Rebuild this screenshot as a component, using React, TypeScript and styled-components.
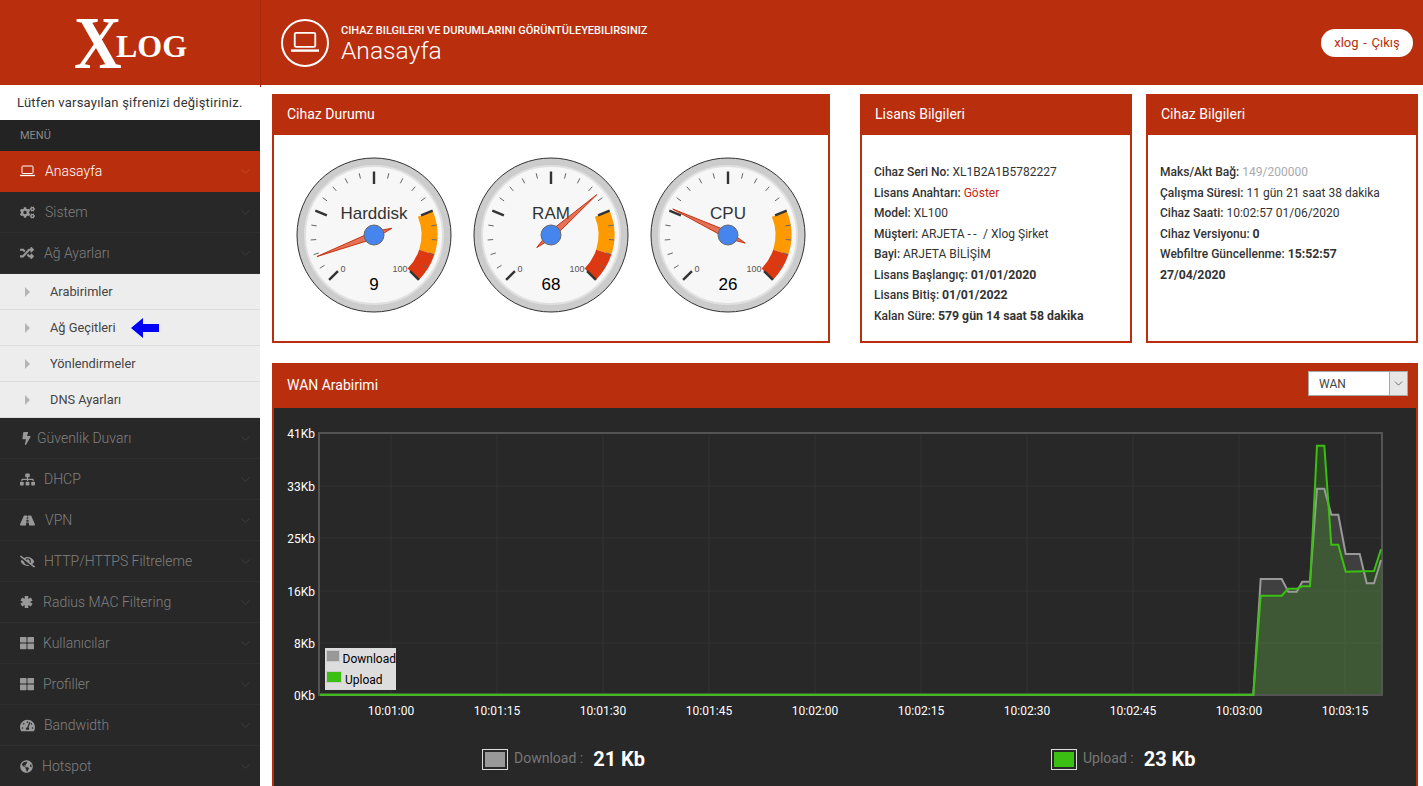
import styled, { createGlobalStyle } from 'styled-components'
import { ChevronDown } from 'lucide-react'
import {
  FaBolt,
  FaCogs,
  FaEyeSlash,
  FaGlobeAmericas,
  FaRandom,
  FaRoad,
  FaSitemap,
  FaTachometerAlt,
  FaThLarge,
} from 'react-icons/fa'
import type { ReactNode } from 'react'

const RED = '#b92e0c'

const GlobalStyle = createGlobalStyle`
  html, body {
    margin: 0;
    height: 100%;
    overflow: hidden;
    background: #fff;
    font-family: Roboto, "Liberation Sans", sans-serif;
  }
`

function LaptopIcon({ size }: { size: number }) {
  return (
    <svg width={size} height={size * 0.8} viewBox="0 0 30 24" fill="none" stroke="currentColor">
      <rect x="4" y="2" width="22" height="15" rx="1.5" strokeWidth="2" />
      <path d="M0 21h30" strokeWidth="2.6" />
    </svg>
  )
}

function AsteriskIcon() {
  return (
    <svg width={13} height={14} viewBox="0 0 13 14" stroke="currentColor" strokeWidth={3.6}>
      <path d="M6.5 1v12M1.3 4l10.4 6M11.7 4L1.3 10" />
    </svg>
  )
}

const menuTop = [
  { label: 'Anasayfa', icon: <LaptopIcon size={15} />, left: 45, active: true },
  { label: 'Sistem', icon: <FaCogs size={15} />, left: 45 },
  { label: 'Ağ Ayarları', icon: <FaRandom size={14} />, left: 44 },
]

const subMenu = ['Arabirimler', 'Ağ Geçitleri', 'Yönlendirmeler', 'DNS Ayarları']

const menuBottom = [
  { label: 'Güvenlik Duvarı', icon: <FaBolt size={13} />, left: 37 },
  { label: 'DHCP', icon: <FaSitemap size={15} />, left: 44 },
  { label: 'VPN', icon: <FaRoad size={15} />, left: 45 },
  { label: 'HTTP/HTTPS Filtreleme', icon: <FaEyeSlash size={15} />, left: 44 },
  { label: 'Radius MAC Filtering', icon: <AsteriskIcon />, left: 43 },
  { label: 'Kullanıcılar', icon: <FaThLarge size={14} />, left: 43 },
  { label: 'Profiller', icon: <FaThLarge size={14} />, left: 43 },
  { label: 'Bandwidth', icon: <FaTachometerAlt size={15} />, left: 44 },
  { label: 'Hotspot', icon: <FaGlobeAmericas size={13} />, left: 42 },
]

function polar(r: number, pct: number, cx = 88, cy = 88) {
  const a = ((-225 + pct * 2.7) * Math.PI) / 180
  return [cx + r * Math.cos(a), cy + r * Math.sin(a)]
}

function band(from: number, to: number, r1: number, r2: number) {
  const [ax, ay] = polar(r2, from)
  const [bx, by] = polar(r2, to)
  const [cx, cy] = polar(r1, to)
  const [dx, dy] = polar(r1, from)
  return `M${ax} ${ay}A${r2} ${r2} 0 0 1 ${bx} ${by}L${cx} ${cy}A${r1} ${r1} 0 0 0 ${dx} ${dy}Z`
}

function Gauge({ label, value }: { label: string; value: number }) {
  const ticks: ReactNode[] = []
  for (let i = 0; i <= 20; i++) {
    const major = i % 5 === 0
    const [x1, y1] = polar(major ? 51 : 58, i * 5)
    const [x2, y2] = polar(63.5, i * 5)
    ticks.push(
      <line
        key={i}
        x1={x1}
        y1={y1}
        x2={x2}
        y2={y2}
        stroke={major ? '#333' : '#666'}
        strokeWidth={major ? 2.4 : 1}
      />
    )
  }
  const [tx, ty] = polar(61, value)
  const [bx, by] = polar(-19, value)
  const [sx, sy] = polar(3.5, value + 100 / 3)
  const [ex, ey] = polar(3.5, value - 100 / 3)
  return (
    <svg width={177} height={177} viewBox="0 0 177 177">
      <circle cx={88} cy={88} r={77} fill="#ccc" stroke="#333" strokeWidth={1} />
      <circle cx={88} cy={88} r={69} fill="#f7f7f7" stroke="#e0e0e0" strokeWidth={2} />
      <path d={band(75, 90, 47.5, 63.5)} fill="#ff9900" />
      <path d={band(90, 100, 47.5, 63.5)} fill="#dc3912" />
      {ticks}
      <text x={88} y={72} textAnchor="middle" fontFamily="Liberation Sans" fontSize={17} fill="#333">
        {label}
      </text>
      <text x={57} y={125} textAnchor="middle" fontFamily="Liberation Sans" fontSize={9} fill="#555">
        0
      </text>
      <text x={114} y={125} textAnchor="middle" fontFamily="Liberation Sans" fontSize={9} fill="#555">
        100
      </text>
      <text x={88} y={143} textAnchor="middle" fontFamily="Liberation Sans" fontSize={17} fill="#000">
        {value}
      </text>
      <path
        d={`M${tx} ${ty}L${sx} ${sy}L${bx} ${by}L${ex} ${ey}Z`}
        fill="#dc3912"
        fillOpacity={0.7}
        stroke="#c63310"
        strokeWidth={1}
      />
      <circle cx={88} cy={88} r={10} fill="#4684ee" stroke="#666" strokeWidth={1} />
    </svg>
  )
}

const yTicks = [
  { label: '41Kb', y: 433 },
  { label: '33Kb', y: 486 },
  { label: '25Kb', y: 538 },
  { label: '16Kb', y: 591 },
  { label: '8Kb', y: 643 },
  { label: '0Kb', y: 695 },
]

const xTicks = [
  { label: '10:01:00', x: 391 },
  { label: '10:01:15', x: 497 },
  { label: '10:01:30', x: 603 },
  { label: '10:01:45', x: 709 },
  { label: '10:02:00', x: 815 },
  { label: '10:02:15', x: 921 },
  { label: '10:02:30', x: 1027 },
  { label: '10:02:45', x: 1133 },
  { label: '10:03:00', x: 1239 },
  { label: '10:03:15', x: 1345 },
]

const downloadLine =
  '320,694.7 1253.3,694.7 1260.7,579 1281.7,579 1288.3,591.7 1296.7,591.7 1302.3,581.7 1310,581.7 1317,488.7 1324.3,488.7 1331.3,514.7 1338.3,514.7 1345.7,554 1359.7,554 1366.7,583.3 1374,583.3 1381,560'
const uploadLine =
  '320,694.7 1253.3,694.7 1260.7,595.7 1281.7,595.7 1288,588.7 1297,588.7 1302,586.3 1310,586.3 1317,445.7 1324.3,445.7 1331.3,544.7 1338.3,544.7 1345.7,571.7 1374,571 1381,549.3'

function TrafficChart() {
  return (
    <ChartWrap>
      <svg width={1142} height={330} viewBox="274 408 1142 330">
        {yTicks.map((t) => (
          <line key={t.y} x1={319} x2={1382} y1={t.y} y2={t.y} stroke="#333" strokeWidth={1} />
        ))}
        {xTicks.map((t) => (
          <line key={t.x} x1={t.x} x2={t.x} y1={433} y2={695} stroke="#333" strokeWidth={1} />
        ))}
        <polygon points={`${downloadLine} 1381,694.7`} fill="#999" fillOpacity={0.2} />
        <polygon points={`${uploadLine} 1381,694.7`} fill="#3bbf12" fillOpacity={0.2} />
        <rect x={319} y={433} width={1063} height={262} fill="none" stroke="#545454" strokeWidth={2} />
        <polyline points={downloadLine} fill="none" stroke="#999" strokeWidth={2} />
        <polyline points={uploadLine} fill="none" stroke="#3bbf12" strokeWidth={2} />
        {yTicks.map((t) => (
          <ChartLabel key={t.y} x={315} y={t.y + 5} textAnchor="end">
            {t.label}
          </ChartLabel>
        ))}
        {xTicks.map((t) => (
          <ChartLabel key={t.x} x={t.x} y={715} textAnchor="middle">
            {t.label}
          </ChartLabel>
        ))}
      </svg>
      <Legend>
        <LegendRow>
          <LegendSwatch $color="#999" />
          Download
        </LegendRow>
        <LegendRow>
          <LegendSwatch $color="#3bbf12" />
          Upload
        </LegendRow>
      </Legend>
    </ChartWrap>
  )
}

function MenuRow({
  label,
  icon,
  left,
  active,
}: {
  label: string
  icon: ReactNode
  left: number
  active?: boolean
}) {
  return (
    <MenuItem $active={active}>
      <MenuIcon $width={left - 20} $active={active}>
        {icon}
      </MenuIcon>
      <MenuLabel>{label}</MenuLabel>
      <ChevronDown size={15} strokeWidth={1} color={active ? '#c9583a' : '#4a4a4a'} />
    </MenuItem>
  )
}

export default function App() {
  return (
    <Root>
      <GlobalStyle />
      <TopBar>
        <LogoBox>
          <LogoX>X</LogoX>
          <LogoRest>LOG</LogoRest>
        </LogoBox>
        <PageIcon>
          <LaptopIcon size={28} />
        </PageIcon>
        <PageTitles>
          <PageHint>CIHAZ BILGILERI VE DURUMLARINI GÖRÜNTÜLEYEBILIRSINIZ</PageHint>
          <PageTitle>Anasayfa</PageTitle>
        </PageTitles>
        <UserPill>xlog - Çıkış</UserPill>
      </TopBar>

      <Body>
        <Sidebar>
          <Notice>Lütfen varsayılan şifrenizi değiştiriniz.</Notice>
          <MenuHeading>MENÜ</MenuHeading>
          {menuTop.map((m) => (
            <MenuRow key={m.label} {...m} />
          ))}
          <SubMenu>
            {subMenu.map((s) => (
              <SubItem key={s}>
                <SubCaret />
                {s}
                {s === 'Ağ Geçitleri' && (
                  <ArrowMark width={28} height={20} viewBox="0 0 28 20">
                    <path d="M0 10L12 0V6H28V14H12V20Z" fill="#0000f5" />
                  </ArrowMark>
                )}
              </SubItem>
            ))}
          </SubMenu>
          {menuBottom.map((m) => (
            <MenuRow key={m.label} {...m} />
          ))}
        </Sidebar>

        <Main>
          <TopPanels>
            <Panel $width={558}>
              <PanelHead>Cihaz Durumu</PanelHead>
              <Gauges>
                <Gauge label="Harddisk" value={9} />
                <Gauge label="RAM" value={68} />
                <Gauge label="CPU" value={26} />
              </Gauges>
            </Panel>

            <Panel $width={272} $offset={30}>
              <PanelHead>Lisans Bilgileri</PanelHead>
              <InfoList>
                <InfoLine>
                  <InfoKey>Cihaz Seri No:</InfoKey> XL1B2A1B5782227
                </InfoLine>
                <InfoLine>
                  <InfoKey>Lisans Anahtarı:</InfoKey> <LinkText>Göster</LinkText>
                </InfoLine>
                <InfoLine>
                  <InfoKey>Model:</InfoKey> XL100
                </InfoLine>
                <InfoLine>
                  <InfoKey>Müşteri:</InfoKey> ARJETA <Dashes>--</Dashes> / Xlog Şirket
                </InfoLine>
                <InfoLine>
                  <InfoKey>Bayi:</InfoKey> ARJETA BİLİŞİM
                </InfoLine>
                <InfoLine>
                  <InfoKey>Lisans Başlangıç:</InfoKey> <strong>01/01/2020</strong>
                </InfoLine>
                <InfoLine>
                  <InfoKey>Lisans Bitiş:</InfoKey> <strong>01/01/2022</strong>
                </InfoLine>
                <InfoLine>
                  <InfoKey>Kalan Süre:</InfoKey> <strong>579 gün 14 saat 58 dakika</strong>
                </InfoLine>
              </InfoList>
            </Panel>

            <Panel $width={272} $offset={14}>
              <PanelHead>Cihaz Bilgileri</PanelHead>
              <InfoList>
                <InfoLine>
                  <InfoKey>Maks/Akt Bağ:</InfoKey> <MutedText>149/200000</MutedText>
                </InfoLine>
                <InfoLine>
                  <InfoKey>Çalışma Süresi:</InfoKey> 11 gün 21 saat 38 dakika
                </InfoLine>
                <InfoLine>
                  <InfoKey>Cihaz Saati:</InfoKey> 10:02:57 01/06/2020
                </InfoLine>
                <InfoLine>
                  <InfoKey>Cihaz Versiyonu:</InfoKey> <strong>0</strong>
                </InfoLine>
                <InfoLine>
                  <InfoKey>Webfiltre Güncellenme:</InfoKey> <strong>15:52:57</strong>{' '}
                  <strong>27/04/2020</strong>
                </InfoLine>
              </InfoList>
            </Panel>
          </TopPanels>

          <WanPanel>
            <WanHead>
              WAN Arabirimi
              <FakeSelect>
                <SelectValue>WAN</SelectValue>
                <SelectButton>
                  <ChevronDown size={13} strokeWidth={1.2} color="#333" />
                </SelectButton>
              </FakeSelect>
            </WanHead>
            <WanBody>
              <TrafficChart />
              <Totals>
                <TotalBlock $width={569}>
                  <TotalSwatch $color="#999" />
                  <TotalLabel>Download :</TotalLabel>
                  <TotalValue>21 Kb</TotalValue>
                </TotalBlock>
                <TotalBlock>
                  <TotalSwatch $color="#3bbf12" />
                  <TotalLabel>Upload :</TotalLabel>
                  <TotalValue>23 Kb</TotalValue>
                </TotalBlock>
              </Totals>
            </WanBody>
          </WanPanel>
        </Main>
      </Body>
    </Root>
  )
}

const Root = styled.div`
  height: 100vh;
  overflow: hidden;
  display: flex;
  flex-direction: column;
`

const TopBar = styled.header`
  height: 85px;
  flex: none;
  display: flex;
  align-items: center;
  background: ${RED};
  color: #fff;
`

const LogoBox = styled.div`
  position: relative;
  width: 260px;
  height: 100%;
  flex: none;
  display: flex;
  align-items: center;
  padding-left: 74px;
  box-sizing: border-box;
  font-family: 'Liberation Serif', serif;
  font-weight: 700;
  &::after {
    content: '';
    position: absolute;
    right: -1px;
    top: 0;
    width: 1px;
    height: 87px;
    background: #a5290a;
  }
`

const LogoX = styled.span`
  display: inline-block;
  font-size: 75px;
  line-height: 1;
  width: 42px;
  transform: scaleX(0.88);
  transform-origin: left center;
`

const LogoRest = styled.span`
  font-size: 32px;
  line-height: 1;
  margin-top: 7px;
`

const PageIcon = styled.div`
  width: 44px;
  height: 44px;
  margin-left: 21px;
  flex: none;
  border: 2.5px solid #fff;
  border-radius: 50%;
  display: flex;
  align-items: center;
  justify-content: center;
`

const PageTitles = styled.div`
  margin-left: 12px;
  padding-top: 4px;
  flex: 1;
`

const PageHint = styled.div`
  font-size: 11px;
  font-weight: 500;
  line-height: 13px;
`

const PageTitle = styled.div`
  font-size: 24.6px;
  font-weight: 300;
  line-height: 28px;
`

const UserPill = styled.div`
  margin-right: 10px;
  height: 28px;
  width: 92px;
  display: flex;
  align-items: center;
  justify-content: center;
  background: #fff;
  border-radius: 14px;
  color: ${RED};
  font-size: 13px;
  word-spacing: 1.5px;
`

const Body = styled.div`
  flex: 1;
  min-height: 0;
  display: flex;
`

const Sidebar = styled.aside`
  width: 260px;
  flex: none;
`

const Notice = styled.div`
  height: 35px;
  display: flex;
  align-items: center;
  padding-left: 17px;
  font-size: 13px;
  letter-spacing: 0.22px;
  color: #333;
`

const MenuHeading = styled.div`
  height: 31px;
  display: flex;
  align-items: center;
  padding-left: 20px;
  background: #232323;
  color: #8a8a8a;
  font-size: 11px;
`

const MenuItem = styled.div<{ $active?: boolean }>`
  height: 41px;
  box-sizing: border-box;
  display: flex;
  align-items: center;
  padding: 0 7px 0 20px;
  background: ${(p) => (p.$active ? RED : '#282828')};
  border-bottom: 1px solid ${(p) => (p.$active ? RED : '#2f2f2f')};
  color: ${(p) => (p.$active ? '#fff' : '#808080')};
  font-size: 14px;
  font-weight: 300;
`

const MenuIcon = styled.span<{ $width: number; $active?: boolean }>`
  width: ${(p) => p.$width}px;
  flex: none;
  display: flex;
  align-items: center;
  color: ${(p) => (p.$active ? '#fff' : '#999')};
`

const MenuLabel = styled.span`
  flex: 1;
`

const SubMenu = styled.div`
  background: #ededed;
`

const SubItem = styled.div`
  height: 36px;
  box-sizing: border-box;
  display: flex;
  align-items: center;
  padding-left: 25px;
  border-bottom: 1px solid #dcdcdc;
  color: #444;
  font-size: 12.8px;
`

const SubCaret = styled.span`
  width: 0;
  height: 0;
  margin-right: 20px;
  border-left: 5px solid #b5b5b5;
  border-top: 5px solid transparent;
  border-bottom: 5px solid transparent;
`

const ArrowMark = styled.svg`
  margin-left: 15px;
`

const Main = styled.main`
  flex: 1;
  min-width: 0;
  padding: 9px 5px 0 12px;
`

const TopPanels = styled.div`
  display: flex;
  height: 249px;
`

const Panel = styled.section<{ $width: number; $offset?: number }>`
  width: ${(p) => p.$width}px;
  margin-left: ${(p) => p.$offset ?? 0}px;
  box-sizing: border-box;
  flex: none;
  border: 2px solid ${RED};
  border-top: 0;
  background: #fff;
`

const PanelHead = styled.h2`
  margin: 0 -2px;
  height: 41px;
  box-sizing: border-box;
  display: flex;
  align-items: center;
  padding: 0 0 2px 15px;
  background: ${RED};
  color: #fff;
  font-size: 14px;
  font-weight: 400;
`

const Gauges = styled.div`
  display: flex;
  padding: 12px 0 0 12px;
`

const InfoList = styled.div`
  padding: 27px 20px 0 12px;
`

const InfoLine = styled.div`
  font-size: 12px;
  line-height: 20.5px;
  color: #333;
  strong {
    font-size: 12.3px;
    font-weight: 700;
  }
`

const InfoKey = styled.span`
  font-weight: 500;
`

const Dashes = styled.span`
  letter-spacing: 2.5px;
  margin-right: 1px;
`

const LinkText = styled.span`
  color: #c8290c;
`

const MutedText = styled.span`
  color: #aaa;
`

const WanPanel = styled.section`
  margin-top: 20px;
  width: 1146px;
  box-sizing: border-box;
  border: 2px solid ${RED};
  border-top: 0;
`

const WanHead = styled.div`
  margin: 0 -2px;
  height: 45px;
  display: flex;
  align-items: center;
  justify-content: space-between;
  padding: 0 10px 2px 15px;
  box-sizing: border-box;
  background: ${RED};
  color: #fff;
  font-size: 14px;
  font-weight: 400;
`

const FakeSelect = styled.div`
  width: 100px;
  height: 25px;
  margin-bottom: 2px;
  box-sizing: border-box;
  display: flex;
  border: 1px solid #a8a8a8;
  background: #fff;
`

const SelectValue = styled.span`
  flex: 1;
  display: flex;
  align-items: center;
  padding-left: 10px;
  color: #444;
  font-size: 12px;
  font-weight: 400;
`

const SelectButton = styled.span`
  width: 17px;
  display: flex;
  align-items: center;
  justify-content: center;
  background: #e6e6e6;
  border-left: 1px solid #a8a8a8;
`

const WanBody = styled.div`
  background: #282828;
  padding-bottom: 20px;
`

const ChartWrap = styled.div`
  position: relative;
  height: 330px;
`

const ChartLabel = styled.text`
  fill: #fff;
  font-family: Roboto, sans-serif;
  font-size: 12px;
  font-weight: 400;
`

const Legend = styled.div`
  position: absolute;
  left: 51px;
  top: 240px;
  width: 71px;
  height: 42px;
  background: #ddd;
  color: #000;
  font-size: 12px;
  font-family: Roboto, sans-serif;
`

const LegendRow = styled.div`
  height: 21px;
  display: flex;
  align-items: center;
  gap: 3px;
  padding-left: 1px;
`

const LegendSwatch = styled.span<{ $color: string }>`
  width: 14px;
  height: 10px;
  margin-top: -5px;
  background: ${(p) => p.$color};
  border: 1px solid #ccc;
`

const Totals = styled.div`
  display: flex;
  padding: 9px 0 0 208px;
`

const TotalBlock = styled.div<{ $width?: number }>`
  width: ${(p) => (p.$width ? `${p.$width}px` : 'auto')};
  display: flex;
  align-items: center;
`

const TotalSwatch = styled.span<{ $color: string }>`
  width: 26px;
  height: 21px;
  box-sizing: border-box;
  border: 1px solid #ddd;
  padding: 2px;
  background: ${(p) => p.$color};
  background-clip: content-box;
  margin-right: 6px;
`

const TotalLabel = styled.span`
  color: #777;
  font-size: 14px;
  line-height: 18px;
  margin: -2px 10px 0 0;
`

const TotalValue = styled.span`
  color: #fff;
  font-size: 20px;
  font-weight: 700;
`
